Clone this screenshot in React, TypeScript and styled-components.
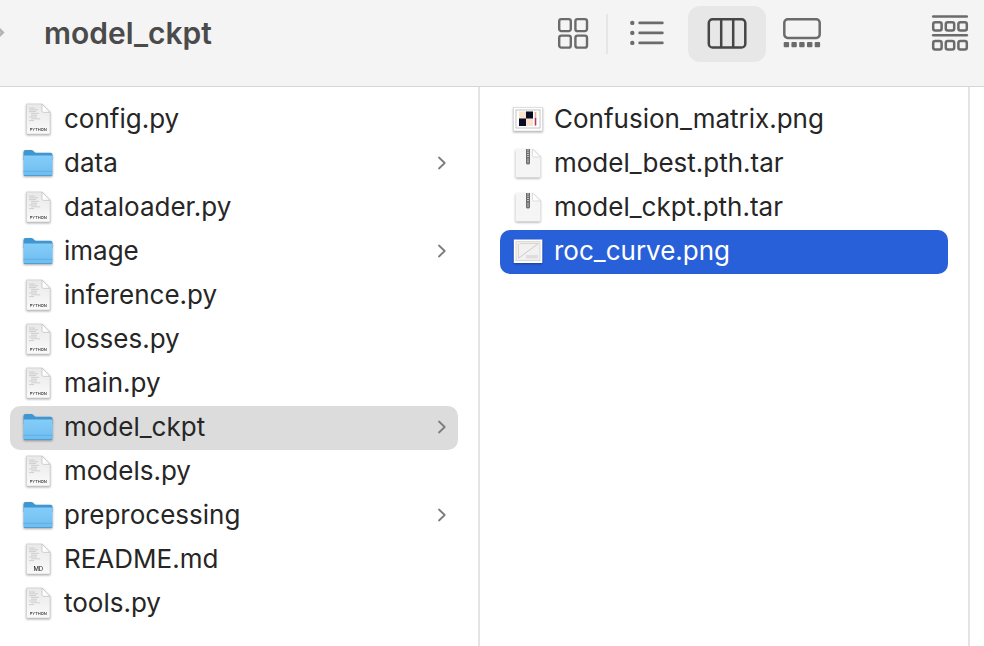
import React, { useState } from "react";
import styled, { createGlobalStyle } from "styled-components";

type FileKind = "python" | "markdown" | "folder" | "archive" | "matrix" | "curve";

interface Entry {
  name: string;
  kind: FileKind;
}

const projectEntries: Entry[] = [
  { name: "config.py", kind: "python" },
  { name: "data", kind: "folder" },
  { name: "dataloader.py", kind: "python" },
  { name: "image", kind: "folder" },
  { name: "inference.py", kind: "python" },
  { name: "losses.py", kind: "python" },
  { name: "main.py", kind: "python" },
  { name: "model_ckpt", kind: "folder" },
  { name: "models.py", kind: "python" },
  { name: "preprocessing", kind: "folder" },
  { name: "README.md", kind: "markdown" },
  { name: "tools.py", kind: "python" },
];

const checkpointEntries: Entry[] = [
  { name: "Confusion_matrix.png", kind: "matrix" },
  { name: "model_best.pth.tar", kind: "archive" },
  { name: "model_ckpt.pth.tar", kind: "archive" },
  { name: "roc_curve.png", kind: "curve" },
];

const GlobalStyle = createGlobalStyle`
  * { box-sizing: border-box; }
  body {
    margin: 0;
    background: #ffffff;
    font-family: Inter, "Liberation Sans", sans-serif;
  }
`;

const Window = styled.div`
  display: flex;
  flex-direction: column;
  min-height: 100vh;
  overflow: hidden;
`;

const Toolbar = styled.header`
  display: flex;
  align-items: flex-start;
  height: 87px;
  padding-top: 6px;
  background: #f4f4f4;
  border-bottom: 1px solid #d6d6d6;
`;

const TitleGroup = styled.div`
  display: flex;
  flex: 1;
  align-items: center;
  gap: 38px;
  height: 56px;
  padding-bottom: 2px;
  min-width: 0;
`;

const ForwardButton = styled.button`
  display: flex;
  width: 6px;
  padding: 0;
  border: 0;
  background: none;
  color: #b4b4b4;
`;

const Title = styled.h1`
  margin: 0;
  color: #4b4b4b;
  font-size: 30px;
  font-weight: 600;
  line-height: 54px;
`;

const ViewSwitcher = styled.div`
  display: flex;
  align-items: center;
  margin-right: 78px;
`;

const ToolButton = styled.button<{ $width: number; $active?: boolean }>`
  display: flex;
  align-items: center;
  justify-content: center;
  width: ${(p) => p.$width}px;
  height: 56px;
  padding: 0 0 2px;
  border: 0;
  border-radius: 12px;
  background: ${(p) => (p.$active ? "#e7e7e7" : "transparent")};
  color: ${(p) => (p.$active ? "#464646" : "#6b6b6b")};
`;

const Divider = styled.span`
  width: 2px;
  height: 40px;
  background: #e6e6e6;
`;

const Browser = styled.main`
  display: grid;
  flex: 1;
  grid-template-columns: 480fr 490fr 14px;
`;

const Column = styled.section<{ $inset: number }>`
  min-width: 0;
  padding: 11px 20px 20px ${(p) => p.$inset}px;
  border-right: 2px solid #e4e4e4;
`;

const EntryList = styled.ul`
  margin: 0;
  padding: 0;
  list-style: none;
`;

type Tone = "plain" | "path" | "focus";

const rowBackground: Record<Tone, string> = {
  plain: "transparent",
  path: "#dcdcdc",
  focus: "#2860d9",
};

const EntryButton = styled.button<{ $tone: Tone }>`
  display: flex;
  align-items: center;
  gap: 10px;
  width: 100%;
  height: 44px;
  padding: 0 11px 2px 12px;
  border: 0;
  border-radius: 10px;
  background: ${(p) => rowBackground[p.$tone]};
  color: ${(p) => (p.$tone === "focus" ? "#ffffff" : "#262626")};
  font-family: inherit;
  font-size: 26px;
  line-height: 42px;
  text-align: left;
`;

const EntryName = styled.span`
  flex: 1;
  overflow: hidden;
  text-overflow: ellipsis;
  white-space: nowrap;
`;

const Glyph = styled.svg`
  display: block;
  flex: none;
  overflow: visible;
`;

const FileGlyph = styled(Glyph)`
  filter: drop-shadow(0 1px 1px rgba(0, 0, 0, 0.35));
`;

const Chevron = () => (
  <Glyph width="10" height="14" viewBox="0 0 10 14" fill="none" stroke="#7c7c7c" strokeWidth="1.8" strokeLinecap="round" strokeLinejoin="round">
    <path d="M2 1.5 7.7 7 2 12.5" />
  </Glyph>
);

const GridIcon = () => (
  <Glyph width="30" height="31" viewBox="0 0 30 31" fill="none" stroke="currentColor" strokeWidth="2.4">
    <rect x="1.2" y="1.1" width="11.6" height="12" rx="2.2" />
    <rect x="17.4" y="1.1" width="11.6" height="12" rx="2.2" />
    <rect x="1.2" y="17.6" width="11.6" height="12" rx="2.2" />
    <rect x="17.4" y="17.6" width="11.6" height="12" rx="2.2" />
  </Glyph>
);

const ListIcon = () => (
  <Glyph width="36" height="26" viewBox="0 0 36 26" fill="currentColor">
    {[2.9, 12.9, 22.9].map((y) => (
      <g key={y}>
        <circle cx="2.3" cy={y} r="2.2" />
        <rect x="8.3" y={y - 1.3} width="25.4" height="2.6" rx="1.3" />
      </g>
    ))}
  </Glyph>
);

const ColumnsIcon = () => (
  <Glyph width="40" height="31" viewBox="0 0 40 31" fill="none" stroke="currentColor" strokeWidth="2.5">
    <rect x="1.8" y="1.3" width="36.5" height="28.2" rx="3.8" />
    <path d="M14.2 1.5v28M26.2 1.5v28" />
  </Glyph>
);

const GalleryIcon = () => (
  <Glyph width="38" height="31" viewBox="0 0 38 31" fill="currentColor">
    <rect x="1.3" y="1.3" width="35.4" height="18.6" rx="3.4" fill="none" stroke="currentColor" strokeWidth="2.5" />
    {[0.7, 8.4, 16.2, 24, 31.7].map((x) => (
      <rect key={x} x={x} y="24" width="5.4" height="5.2" rx="1" />
    ))}
  </Glyph>
);

const GroupIcon = () => (
  <Glyph width="36" height="36" viewBox="0 0 36 36" fill="none" stroke="currentColor" strokeWidth="2.5">
    {[0, 18.8].map((y) => (
      <g key={y}>
        <path d={`M1.2 ${y + 1.5}H34.8`} strokeLinecap="round" />
        {[1.2, 13.8, 26.4].map((x) => (
          <rect key={x} x={x} y={y + 7.2} width="8.4" height="8.4" rx="2" />
        ))}
      </g>
    ))}
  </Glyph>
);

const DocumentIcon = ({ label }: { label: string }) => (
  <FileGlyph width="32" height="32" viewBox="0 0 32 32">
    <defs>
      <linearGradient id="paper" x1="0" y1="0" x2="0" y2="1">
        <stop offset="0" stopColor="#e9e9e9" />
        <stop offset="1" stopColor="#fafafa" />
      </linearGradient>
    </defs>
    <path d="M4.5 1H20l8 8.3V31H4.5Z" fill="url(#paper)" stroke="#cfcfcf" strokeWidth=".6" />
    <path d="M20 1v6.8c0 1 .5 1.5 1.5 1.5H28Z" fill="#ffffff" stroke="#c2c2c2" strokeWidth=".8" />
    <path d="M7 5h6M7 6.800h9M7 8.600h7M9 10.400h8M9 12.200h6M7 14h8M9 15.800h9M7 17.600h5" stroke="#b9b9b9" strokeWidth=".6" />
    <text
      x="16.3"
      y="27.7"
      textAnchor="middle"
      fill="#333333"
      fontFamily="Inter, sans-serif"
      fontSize={label === "MD" ? 6 : 4}
      fontWeight="500"
    >
      {label}
    </text>
  </FileGlyph>
);

const FolderIcon = () => (
  <FileGlyph width="32" height="28" viewBox="0 0 32 28">
    <defs>
      <linearGradient id="folderFront" x1="0" y1="0" x2="0" y2="1">
        <stop offset="0" stopColor="#84cdf9" />
        <stop offset="1" stopColor="#6fbcef" />
      </linearGradient>
    </defs>
    <path d="M1.5 3Q1.5 1 3.5 1h6.2c1.6 0 2.3 2.7 4 2.7h14.8q2 0 2 2V11h-29Z" fill="#3f96d0" />
    <path d="M1.5 7.8q0-1.3 1.3-1.3h26.4q1.3 0 1.3 1.3v17.7q0 1.5-1.5 1.5H3q-1.5 0-1.5-1.5Z" fill="url(#folderFront)" />
    <path d="M1.5 22.3h29" stroke="#5aa9de" strokeWidth=".8" />
    <path d="M2 26.5h28" stroke="#4d9fd6" strokeWidth="1" />
  </FileGlyph>
);

const ArchiveIcon = () => (
  <FileGlyph width="32" height="32" viewBox="0 0 32 32">
    <path d="M5 2H20.5l8 8V29q0 1.5-1.5 1.5H5Q3.5 30.5 3.5 29V3.5Q3.5 2 5 2Z" fill="#f5f5f5" />
    <path d="M20.5 2v6.5q0 1.5 1.5 1.5h6.5Z" fill="#ffffff" stroke="#d0d0d0" strokeWidth=".7" />
    <path d="M14 2h4v14q0 1.5-2 1.5T14 16Z" fill="#6b6e70" />
    <path d="M16 2.5v9" stroke="#c5c8ca" strokeWidth="2" strokeDasharray="1 1.2" />
    <path d="M16 12.5v3" stroke="#a8abad" strokeWidth="1.4" strokeLinecap="round" />
  </FileGlyph>
);

const MatrixIcon = () => (
  <FileGlyph width="32" height="26" viewBox="0 0 32 26">
    <rect x="1.5" y="1.5" width="29" height="23.5" fill="#ffffff" stroke="#d4d4d4" strokeWidth=".6" />
    <rect x="4" y="4" width="24" height="18" fill="none" stroke="#c4c4c4" strokeWidth="1" />
    <rect x="7" y="5.5" width="14" height="14.5" fill="#f9e3cf" />
    <path d="M14 5.5h7v7h-7ZM7 12.5h7V20H7Z" fill="#0b0b26" />
    <path d="M23.5 6v7" stroke="#e8b296" strokeWidth="1.6" />
    <path d="M23.5 12v7.5" stroke="#ad3a67" strokeWidth="1.6" />
  </FileGlyph>
);

const CurveIcon = () => (
  <FileGlyph width="32" height="26" viewBox="0 0 32 26">
    <rect x="1.8" y="1.5" width="28.5" height="23.5" fill="#ffffff" />
    <rect x="4" y="3.7" width="24" height="19" fill="#f1f1f1" stroke="#cfcfcf" strokeWidth=".8" />
    <path d="M6 20.5 26.5 5.5" stroke="#c7c7c7" strokeWidth=".9" />
    <path d="M6.5 20V6.5Q7 5.5 10 5.5H26" fill="none" stroke="#dfccba" strokeWidth=".8" />
    <rect x="14" y="17" width="12" height="3.5" fill="#dedede" />
  </FileGlyph>
);

const FileIcon = ({ kind }: { kind: FileKind }) => {
  switch (kind) {
    case "folder":
      return <FolderIcon />;
    case "archive":
      return <ArchiveIcon />;
    case "matrix":
      return <MatrixIcon />;
    case "curve":
      return <CurveIcon />;
    default:
      return <DocumentIcon label={kind === "markdown" ? "MD" : "PYTHON"} />;
  }
};

interface FileColumnProps {
  label: string;
  entries: Entry[];
  inset: number;
  selected: string;
  selectedTone: Tone;
  onSelect: (name: string) => void;
}

const FileColumn = ({ label, entries, inset, selected, selectedTone, onSelect }: FileColumnProps) => (
  <Column $inset={inset} aria-label={label}>
    <EntryList>
      {entries.map((entry) => (
        <li key={entry.name}>
          <EntryButton
            type="button"
            $tone={entry.name === selected ? selectedTone : "plain"}
            aria-pressed={entry.name === selected}
            onClick={() => onSelect(entry.name)}
          >
            <FileIcon kind={entry.kind} />
            <EntryName>{entry.name}</EntryName>
            {entry.kind === "folder" && <Chevron />}
          </EntryButton>
        </li>
      ))}
    </EntryList>
  </Column>
);

const views = [
  { id: "Icons", width: 66, icon: <GridIcon /> },
  { id: "List", width: 80, icon: <ListIcon /> },
  { id: "Columns", width: 78, icon: <ColumnsIcon /> },
  { id: "Gallery", width: 72, icon: <GalleryIcon /> },
];

export default function App() {
  const [view, setView] = useState("Columns");
  const [folder, setFolder] = useState("model_ckpt");
  const [file, setFile] = useState("roc_curve.png");

  return (
    <Window>
      <GlobalStyle />
      <Toolbar>
        <TitleGroup>
          <ForwardButton type="button" aria-label="Forward">
            <Glyph width="6" height="12" viewBox="0 0 6 12" fill="none" stroke="currentColor" strokeWidth="3" strokeLinecap="round">
              <path d="M-3 11 2.5 5.5-3 0" />
            </Glyph>
          </ForwardButton>
          <Title>model_ckpt</Title>
        </TitleGroup>
        <ViewSwitcher role="group" aria-label="View">
          {views.map((item, index) => (
            <React.Fragment key={item.id}>
              {index === 1 && <Divider />}
              <ToolButton
                type="button"
                $width={item.width}
                $active={view === item.id}
                aria-label={item.id}
                aria-pressed={view === item.id}
                onClick={() => setView(item.id)}
              >
                {item.icon}
              </ToolButton>
            </React.Fragment>
          ))}
        </ViewSwitcher>
        <ToolButton type="button" $width={68} aria-label="Group items">
          <GroupIcon />
        </ToolButton>
      </Toolbar>
      <Browser>
        <FileColumn
          label="Project"
          entries={projectEntries}
          inset={10}
          selected={folder}
          selectedTone="path"
          onSelect={setFolder}
        />
        <FileColumn
          label="model_ckpt"
          entries={checkpointEntries}
          inset={20}
          selected={file}
          selectedTone="focus"
          onSelect={setFile}
        />
      </Browser>
    </Window>
  );
}
